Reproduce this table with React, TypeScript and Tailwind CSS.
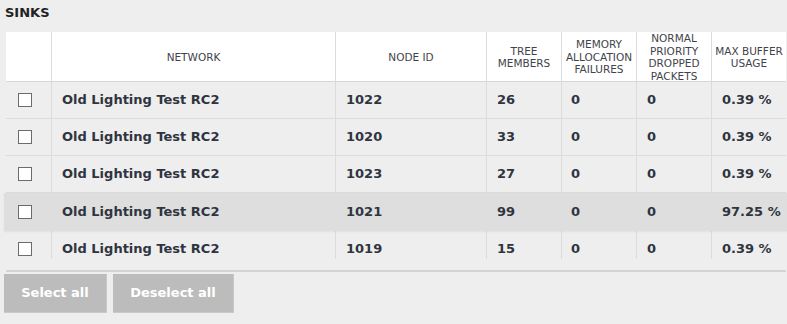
import React from "react";

type Sink = {
  network: string;
  nodeId: string;
  treeMembers: number;
  memFailures: number;
  dropped: number;
  bufferUsage: string;
  active?: boolean;
};

const sinks: Sink[] = [
  { network: "Old Lighting Test RC2", nodeId: "1022", treeMembers: 26, memFailures: 0, dropped: 0, bufferUsage: "0.39 %" },
  { network: "Old Lighting Test RC2", nodeId: "1020", treeMembers: 33, memFailures: 0, dropped: 0, bufferUsage: "0.39 %" },
  { network: "Old Lighting Test RC2", nodeId: "1023", treeMembers: 27, memFailures: 0, dropped: 0, bufferUsage: "0.39 %" },
  { network: "Old Lighting Test RC2", nodeId: "1021", treeMembers: 99, memFailures: 0, dropped: 0, bufferUsage: "97.25 %", active: true },
  { network: "Old Lighting Test RC2", nodeId: "1019", treeMembers: 15, memFailures: 0, dropped: 0, bufferUsage: "0.39 %" },
];

const cols = "grid grid-cols-[45px_284px_151px_75px_75px_75px_75px]";
const font = "font-['DejaVu_Sans',sans-serif]";

function HeaderCell({ children, first }: { children?: React.ReactNode; first?: boolean }) {
  return (
    <div
      className={`flex items-center justify-center px-[3px] text-center text-[10.5px] leading-[12.5px] uppercase text-[#3f444c] ${
        first ? "" : "border-l border-[#dcdcdc]"
      }`}
    >
      {children}
    </div>
  );
}

function Row({ sink, last }: { sink: Sink; last?: boolean }) {
  const border = sink.active ? "border-l border-transparent" : "border-l border-[#dcdcdc]";
  const align = last ? "h-full items-start pt-[10px]" : "items-center";
  const cell = `flex whitespace-nowrap ${border} ${align}`;
  return (
    <div
      className={`${cols} text-[13px] leading-[16px] font-bold text-[#2f3540] ${
        sink.active
          ? "relative -mx-[2px] h-[38px] bg-[#dedede] px-[2px] shadow-[0_1px_2px_rgba(0,0,0,0.06)]"
          : last
            ? "h-[28px]"
            : "h-[37px] border-b border-[#dcdcdc]"
      }`}
    >
      <div className={`flex pl-[12px] ${last ? "items-start pt-[11px]" : "items-center"}`}>
        <span className="h-[14px] w-[14px] border border-[#6b6b6b] bg-white" />
      </div>
      <div className={`${cell} px-[10px]`}>{sink.network}</div>
      <div className={`${cell} px-[10px]`}>{sink.nodeId}</div>
      <div className={`${cell} px-[10px]`}>{sink.treeMembers}</div>
      <div className={`${cell} px-[9px]`}>{sink.memFailures}</div>
      <div className={`${cell} px-[10px]`}>{sink.dropped}</div>
      <div className={`${cell} px-[10px]`}>{sink.bufferUsage}</div>
    </div>
  );
}

export default function App() {
  return (
    <main className={`h-[324px] w-[787px] overflow-hidden bg-[#eeeeee] ${font}`}>
      <h2 className="px-[5px] pt-[5px] text-[13px] leading-[16px] font-bold uppercase text-[#222]">Sinks</h2>

      <div className="mt-[11px] ml-[6px] w-[780px]">
        <div className={`${cols} h-[50px] border-b border-[#d6d6d6] bg-white`}>
          <HeaderCell first />
          <HeaderCell>Network</HeaderCell>
          <HeaderCell>Node ID</HeaderCell>
          <HeaderCell>Tree members</HeaderCell>
          <HeaderCell>Memory allocation failures</HeaderCell>
          <HeaderCell>Normal priority dropped packets</HeaderCell>
          <HeaderCell>Max buffer usage</HeaderCell>
        </div>

        {sinks.map((sink, i) => (
          <Row key={sink.nodeId} sink={sink} last={i === sinks.length - 1} />
        ))}

        <div className="mt-[11px] border-t-2 border-[#d3d3d3]" />
      </div>

      <div className="mt-[2px] ml-[4px] flex gap-[6px]">
        <button className="h-[39px] w-[103px] border-r border-b border-[#c9c9c9] bg-[#bcbcbc] text-[13px] font-bold text-white">
          Select all
        </button>
        <button className="h-[39px] w-[121px] border-r border-b border-[#c9c9c9] bg-[#bcbcbc] text-[13px] font-bold text-white">
          Deselect all
        </button>
      </div>
    </main>
  );
}
